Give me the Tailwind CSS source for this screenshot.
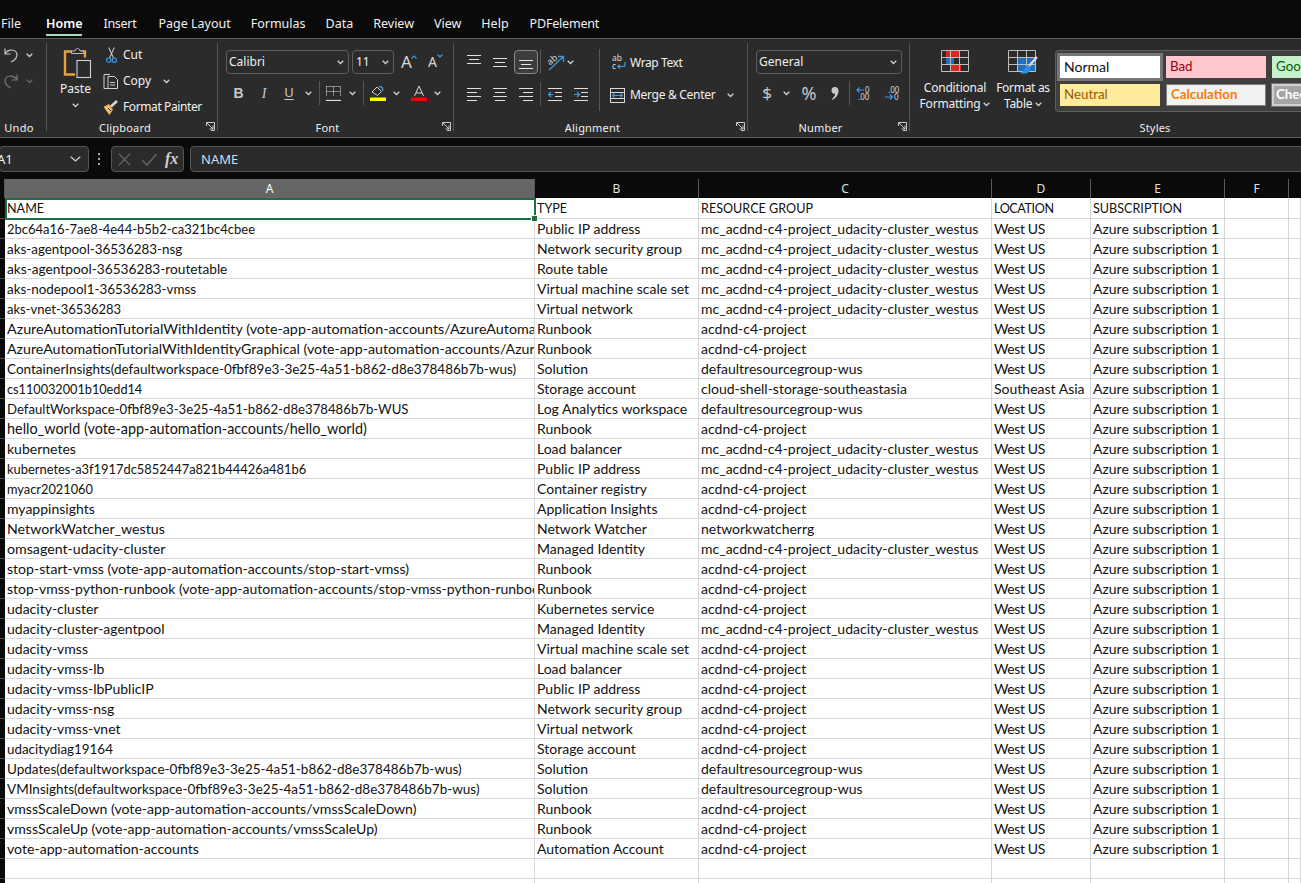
<!DOCTYPE html>
<html><head><meta charset="utf-8"><script src="https://cdn.jsdelivr.net/npm/@tailwindcss/browser@4"></script></head>
<body class="bg-[#0a0a0a]">
<div class="w-[1301px] h-[883px] overflow-hidden flex flex-col bg-[#0a0a0a] text-[#f0f0f0] font-['Noto_Sans','Open_Sans',sans-serif] text-[12px]">

<!-- tabs -->
<div class="h-[38px] shrink-0 flex items-end pb-[6px] pl-[1px] text-[12.5px] leading-[16px] gap-[20px]">
  <span>File</span>
  <span class="ml-[5px] relative font-semibold text-white">Home<span class="absolute left-0 right-0 bottom-[-4px] h-[2px] bg-[#a9dbba]"></span></span>
  <span class="ml-[1px] tracking-[-.3px]">Insert</span><span class="ml-[2px]">Page Layout</span><span>Formulas</span><span>Data</span><span>Review</span><span>View</span><span>Help</span><span class="ml-[1px] tracking-[-.2px]">PDFelement</span>
</div>

<!-- ribbon -->
<div class="h-[100px] shrink-0 flex bg-[#2b2b2b] border-t border-b border-[#5a5a5a] whitespace-nowrap">

  <!-- undo -->
  <div class="w-[46px] shrink-0 flex flex-col">
    <div class="h-[80px] pt-[6px]">
      <div class="flex items-center h-[20px]">
        <svg class="ml-[3px]" width="16" height="18" viewBox="0 0 16 18" fill="none" stroke="#c4c4c4" stroke-width="1.2"><path d="M2 2.5v5.500h5.500M2 8C4 3.500 11 2.500 13.500 6.500 15.500 10.500 12 14.500 8 16"/></svg>
        <svg class="ml-[7px]" width="7" height="5" viewBox="0 0 7 5" fill="none" stroke="#d0d0d0" stroke-width="1.3"><path d="M.7.7l2.800 2.800L6.300.7"/></svg>
      </div>
      <div class="flex items-center h-[20px] mt-[6px]">
        <svg class="ml-[3px]" width="16" height="18" viewBox="0 0 16 18" fill="none" stroke="#777" stroke-width="1.200"><path d="M14 2.500v5.500H8.500M14 8C12 3.500 5 2.500 2.500 6.500.5 10.500 4 14.500 8 16"/></svg>
        <svg class="ml-[7px]" width="7" height="5" viewBox="0 0 7 5" fill="none" stroke="#666" stroke-width="1.3"><path d="M.7.7l2.800 2.800L6.300.7"/></svg>
      </div>
    </div>
    <div class="h-[17px] leading-[17px] text-center text-[11px] tracking-[.3px] pr-[8px]">Undo</div>
  </div>
  <div class="w-px h-[88px] mt-[4px] shrink-0 bg-[#555]"></div>

  <!-- clipboard -->
  <div class="w-[170px] shrink-0 flex flex-col">
    <div class="h-[80px] flex">
      <div class="w-[56px] shrink-0 pt-[8px] flex flex-col items-center">
        <svg class="ml-[5px]" width="30" height="32" viewBox="0 0 30 32" fill="none"><path d="M9 4.500H2v23h10" stroke="#e8a33d" stroke-width="2.400"/><path d="M18 4.500h4v6" stroke="#e8a33d" stroke-width="2.400"/><path d="M8.500 6.500V4h3.500c0-3.200 5-3.200 5 0h3.500v2.500z" stroke="#bdbdbd" stroke-width="1" fill="#2b2b2b"/><rect x="14" y="13.500" width="13.500" height="17" stroke="#d0d0d0" stroke-width="1.100" fill="#2b2b2b"/></svg>
        <span class="mt-[2px] ml-[1px] leading-[16px] text-[12px]">Paste</span>
        <svg class="mt-[6px]" width="7" height="5" viewBox="0 0 7 5" fill="none" stroke="#d0d0d0" stroke-width="1.300"><path d="M.7.7l2.800 2.800L6.300.7"/></svg>
      </div>
      <div class="flex flex-col pt-[3px] leading-[26px]">
        <div class="flex items-center h-[26px]">
          <svg class="ml-[1px]" width="15" height="18" viewBox="0 0 16 18" fill="none"><path d="M5 1l5 11M11 1L6 12" stroke="#c8c8c8" stroke-width="1.100"/><circle cx="5" cy="14.500" r="2.300" stroke="#3c9ae0" stroke-width="1.300"/><circle cx="11" cy="14.500" r="2.300" stroke="#3c9ae0" stroke-width="1.300"/></svg>
          <span class="ml-[4px]">Cut</span>
        </div>
        <div class="flex items-center h-[26px]">
          <svg width="16" height="17" viewBox="0 0 16 17" fill="none" stroke="#d0d0d0" stroke-width="1"><path d="M5.500 15.500H1V1.500h6"/><path d="M5 3.500h6.500l3 3v9H5z" fill="#2b2b2b"/><path d="M7 9.500h5M7 12h5"/></svg>
          <span class="ml-[4px]">Copy</span>
          <svg class="ml-[12px]" width="7" height="5" viewBox="0 0 7 5" fill="none" stroke="#d0d0d0" stroke-width="1.300"><path d="M.7.7l2.800 2.800L6.300.7"/></svg>
        </div>
        <div class="flex items-center h-[26px]">
          <svg width="16" height="16" viewBox="0 0 16 16" fill="none"><path d="M1 8l5.500 7.500 3-5L6 5.500z" fill="#f2c46d" stroke="#e8a33d"/><path d="M8 7.500l6-5.500" stroke="#d8d8d8" stroke-width="2.600"/><path d="M5 9l3 3" stroke="#2b2b2b"/></svg>
          <span class="ml-[4px] tracking-[-.4px]">Format Painter</span>
        </div>
      </div>
    </div>
    <div class="relative h-[17px] leading-[17px] text-center text-[11px] tracking-[.2px] pr-[14px]">Clipboard
      <svg class="absolute right-[2px] top-[3px]" width="9" height="9" viewBox="0 0 9 9" fill="none" stroke="#c8c8c8"><path d="M.5 4V.5H8.500V8.500H5"/><path d="M1 1l6 6M7 3.500V7H3.500"/></svg>
    </div>
  </div>
  <div class="w-px h-[88px] mt-[4px] shrink-0 bg-[#555]"></div>

  <!-- font -->
  <div class="w-[235px] shrink-0 flex flex-col">
    <div class="h-[80px] pt-[11px]">
      <div class="flex items-center h-[24px]">
        <div class="ml-[8px] w-[123px] h-[24px] shrink-0 rounded-[4px] border border-[#5e5e5e] flex items-center justify-between pl-[2px] pr-[4px]"><span>Calibri</span><svg width="7" height="5" viewBox="0 0 7 5" fill="none" stroke="#d0d0d0" stroke-width="1.300"><path d="M.7.7l2.800 2.800L6.300.7"/></svg></div>
        <div class="ml-[3px] w-[42px] h-[24px] shrink-0 rounded-[4px] border border-[#5e5e5e] flex items-center justify-between pl-[3px] pr-[4px]"><span>11</span><svg width="7" height="5" viewBox="0 0 7 5" fill="none" stroke="#d0d0d0" stroke-width="1.300"><path d="M.7.7l2.800 2.800L6.300.7"/></svg></div>
        <div class="ml-[7px] w-[18px] shrink-0 flex items-start text-[#d8d8d8]"><span class="text-[17px] leading-[20px]">A</span><svg class="mt-[3px] -ml-[1px]" width="6" height="4" viewBox="0 0 6 4" fill="none" stroke="#3c9ae0" stroke-width="1.200"><path d="M.5 3.500l2.500-2.500 2.500 2.500"/></svg></div>
        <div class="ml-[9px] w-[18px] shrink-0 flex items-start text-[#d8d8d8]"><span class="text-[14px] leading-[22px]">A</span><svg class="mt-[3px]" width="6" height="4" viewBox="0 0 6 4" fill="none" stroke="#3c9ae0" stroke-width="1.200"><path d="M.5.500l2.500 2.500 2.500-2.500"/></svg></div>
      </div>
      <div class="flex items-center h-[24px] mt-[7px]">
        <span class="ml-[8px] w-[25px] text-center font-bold text-[14px] text-[#c8c8c8] font-['Liberation_Sans',sans-serif]">B</span>
        <span class="w-[26px] text-center italic text-[14px] text-[#c8c8c8] font-['Liberation_Serif',serif]">I</span>
        <span class="w-[24px] text-center underline underline-offset-2 text-[13px] text-[#c8c8c8]">U</span>
        <span class="w-[14px] flex justify-center"><svg width="7" height="5" viewBox="0 0 7 5" fill="none" stroke="#d0d0d0" stroke-width="1.300"><path d="M.7.7l2.800 2.800L6.300.7"/></svg></span>
        <span class="ml-[4px] w-px h-[24px] bg-[#555]"></span>
        <svg class="ml-[6px]" width="15" height="15" viewBox="0 0 15 15" fill="none" stroke="#e0e0e0"><path d="M.5.500h14M.5.500v10M14.500.500v10M7.500.500v10M.5 5.500h14" stroke-dasharray="1 1"/><path d="M0 14.500h15" stroke-width="1.200"/></svg>
        <span class="ml-[4px] w-[14px] flex justify-center"><svg width="7" height="5" viewBox="0 0 7 5" fill="none" stroke="#d0d0d0" stroke-width="1.300"><path d="M.7.7l2.800 2.800L6.300.7"/></svg></span>
        <span class="ml-[4px] w-px h-[24px] bg-[#555]"></span>
        <svg class="ml-[6px]" width="16" height="16" viewBox="0 0 16 16" fill="none"><path d="M2 7l5-5 4.500 4.500-4 4z" stroke="#d0d0d0"/><path d="M9 1.500c2.500 0 4 2 4 4.500" stroke="#3c9ae0" stroke-width="1.300"/><rect x="0" y="12.500" width="16" height="3.500" fill="#ffff00" stroke="none"/></svg>
        <span class="ml-[3px] w-[14px] flex justify-center"><svg width="7" height="5" viewBox="0 0 7 5" fill="none" stroke="#d0d0d0" stroke-width="1.300"><path d="M.7.7l2.800 2.800L6.300.7"/></svg></span>
        <svg class="ml-[8px]" width="16" height="16" viewBox="0 0 16 16" fill="none"><path d="M3.500 11L8 1l4.500 10M5 8h6" stroke="#d8d8d8" stroke-width="1"/><rect x="0" y="12.500" width="16" height="3.500" fill="#ff0000"/></svg>
        <span class="ml-[3px] w-[14px] flex justify-center"><svg width="7" height="5" viewBox="0 0 7 5" fill="none" stroke="#d0d0d0" stroke-width="1.300"><path d="M.7.7l2.800 2.800L6.300.7"/></svg></span>
      </div>
    </div>
    <div class="relative h-[17px] leading-[17px] text-center text-[11px] tracking-[.2px] pr-[16px]">Font
      <svg class="absolute right-[2px] top-[3px]" width="9" height="9" viewBox="0 0 9 9" fill="none" stroke="#c8c8c8"><path d="M.5 4V.5H8.500V8.500H5"/><path d="M1 1l6 6M7 3.500V7H3.500"/></svg>
    </div>
  </div>
  <div class="w-px h-[88px] mt-[4px] shrink-0 bg-[#555]"></div>

  <!-- alignment -->
  <div class="w-[293px] shrink-0 flex flex-col">
    <div class="h-[80px] pt-[11px] flex">
      <div class="w-[145px] shrink-0">
        <div class="flex items-center h-[24px]">
          <svg class="ml-[13px]" width="14" height="14" viewBox="0 0 14 14" stroke="#e0e0e0" fill="none"><path d="M0 .5h14M2 4.500h10M0 8.500h14"/></svg>
          <svg class="ml-[12px]" width="14" height="14" viewBox="0 0 14 14" stroke="#e0e0e0" fill="none"><path d="M0 3.500h14M2 7.500h10M0 11.500h14"/></svg>
          <span class="ml-[7px] w-[24px] h-[24px] rounded-[4px] border border-[#8a8a8a] bg-[#3d3d3d] flex items-center justify-center"><svg width="14" height="14" viewBox="0 0 14 14" stroke="#e8e8e8" fill="none"><path d="M0 5.500h14M2 9.500h10M0 13.500h14"/></svg></span>
          <span class="ml-[2px] w-px h-[24px] bg-[#555]"></span>
          <svg class="ml-[6px]" width="18" height="18" viewBox="0 0 18 18" fill="none"><path d="M2 17L16 4M11 3.500h5.500V9" stroke="#3c9ae0" stroke-width="1.300"/><text x="0" y="10" font-size="9" fill="#d8d8d8" transform="rotate(-40 5 7)">ab</text></svg>
          <svg class="ml-[2px]" width="7" height="5" viewBox="0 0 7 5" fill="none" stroke="#d0d0d0" stroke-width="1.300"><path d="M.7.7l2.800 2.800L6.300.7"/></svg>
        </div>
        <div class="flex items-center h-[24px] mt-[8px]">
          <svg class="ml-[13px]" width="14" height="14" viewBox="0 0 14 14" stroke="#e0e0e0" fill="none"><path d="M0 1.500h14M0 5.500h10M0 9.500h14M0 13.500h10"/></svg>
          <svg class="ml-[12px]" width="14" height="14" viewBox="0 0 14 14" stroke="#e0e0e0" fill="none"><path d="M0 1.500h14M2 5.500h10M0 9.500h14M2 13.500h10"/></svg>
          <svg class="ml-[12px]" width="14" height="14" viewBox="0 0 14 14" stroke="#e0e0e0" fill="none"><path d="M0 1.500h14M4 5.500h10M0 9.500h14M4 13.500h10"/></svg>
          <span class="ml-[7px] w-px h-[24px] bg-[#555]"></span>
          <svg class="ml-[7px]" width="14" height="14" viewBox="0 0 14 14" fill="none"><path d="M0 1.500h14M7 5.500h7M7 9.500h7M0 13.500h14" stroke="#e0e0e0"/><path d="M5 7.500H.5M3 5L.5 7.500 3 10" stroke="#3c9ae0" stroke-width="1.200"/></svg>
          <svg class="ml-[12px]" width="14" height="14" viewBox="0 0 14 14" fill="none"><path d="M0 1.500h14M7 5.500h7M7 9.500h7M0 13.500h14" stroke="#e0e0e0"/><path d="M0 7.500h5M3 5l2.500 2.500L3 10" stroke="#3c9ae0" stroke-width="1.200"/></svg>
        </div>
      </div>
      <div class="w-px h-[62px] -mt-[1px] shrink-0 bg-[#555]"></div>
      <div class="flex-1">
        <div class="flex items-center h-[24px]">
          <svg class="ml-[12px]" width="15" height="16" viewBox="0 0 15 16" fill="none"><text x="0" y="7" font-size="8.500" fill="#d8d8d8">ab</text><text x="0" y="15" font-size="8.500" fill="#d8d8d8">c</text><path d="M13 8v2.500a2 2 0 0 1-2 2H6M8 10.500l-2.200 2L8 14.500" stroke="#3c9ae0" stroke-width="1.200"/></svg>
          <span class="ml-[3px] tracking-[-.4px] pt-[1px]">Wrap Text</span>
        </div>
        <div class="flex items-center h-[24px] mt-[9px]">
          <svg class="ml-[10px]" width="15" height="15" viewBox="0 0 15 15" fill="none"><rect x=".5" y=".5" width="14" height="14" stroke="#d8d8d8"/><path d="M.5 4.500h14M.5 10.500h14" stroke="#d8d8d8"/><path d="M2.500 7.500h10M4.500 5.500l-2 2 2 2M10.500 5.500l2 2-2 2" stroke="#3c9ae0" stroke-width="1.100"/></svg>
          <span class="ml-[5px] tracking-[-.3px]">Merge &amp; Center</span>
          <svg class="ml-[12px]" width="7" height="5" viewBox="0 0 7 5" fill="none" stroke="#d0d0d0" stroke-width="1.300"><path d="M.7.7l2.800 2.800L6.300.7"/></svg>
        </div>
      </div>
    </div>
    <div class="relative h-[17px] leading-[17px] text-center text-[11px] tracking-[.2px] pr-[16px]">Alignment
      <svg class="absolute right-[2px] top-[3px]" width="9" height="9" viewBox="0 0 9 9" fill="none" stroke="#c8c8c8"><path d="M.5 4V.5H8.500V8.500H5"/><path d="M1 1l6 6M7 3.500V7H3.500"/></svg>
    </div>
  </div>
  <div class="w-px h-[88px] mt-[4px] shrink-0 bg-[#555]"></div>

  <!-- number -->
  <div class="w-[161px] shrink-0 flex flex-col">
    <div class="h-[80px] pt-[11px]">
      <div class="ml-[8px] w-[146px] h-[24px] rounded-[4px] border border-[#5e5e5e] flex items-center justify-between pl-[2px] pr-[4px]"><span>General</span><svg width="7" height="5" viewBox="0 0 7 5" fill="none" stroke="#d0d0d0" stroke-width="1.300"><path d="M.7.7l2.800 2.800L6.300.7"/></svg></div>
      <div class="flex items-center h-[24px] mt-[7px]">
        <span class="ml-[8px] w-[22px] text-center text-[17px] text-[#c8c8c8]">$</span>
        <span class="ml-[1px] w-[14px] flex justify-center"><svg width="7" height="5" viewBox="0 0 7 5" fill="none" stroke="#d0d0d0" stroke-width="1.300"><path d="M.7.7l2.800 2.800L6.300.7"/></svg></span>
        <span class="w-[32px] text-center text-[18px] text-[#c8c8c8]">%</span>
        <span class="w-[20px] flex justify-center"><svg width="8" height="13" viewBox="0 0 8 13" fill="#c8c8c8"><path d="M3.800 0a3.500 3.500 0 0 1 3.700 3.700c0 4-2.500 7.300-6 9.100l-.7-.9c2-1.500 3.200-3.200 3.400-5.100A3.200 3.200 0 0 1 .5 3.400 3.400 3.400 0 0 1 3.800 0z"/></svg></span>
        <span class="ml-[4px] w-px h-[24px] bg-[#555]"></span>
        <svg class="ml-[6px]" width="16" height="16" viewBox="0 0 16 16" fill="none"><path d="M8 5H1M3.500 2.500L1 5l2.500 2.500" stroke="#3c9ae0" stroke-width="1.200"/><text x="9" y="7.500" font-size="8" fill="#d8d8d8">0</text><text x="2" y="15" font-size="8" fill="#d8d8d8">.00</text></svg>
        <svg class="ml-[13px]" width="16" height="16" viewBox="0 0 16 16" fill="none"><text x="3" y="7.500" font-size="8" fill="#d8d8d8">.00</text><path d="M0 12h7M5 9.500L7.500 12 5 14.500" stroke="#3c9ae0" stroke-width="1.200"/><text x="9" y="15" font-size="8" fill="#d8d8d8">0</text></svg>
      </div>
    </div>
    <div class="relative h-[17px] leading-[17px] text-center text-[11px] tracking-[.2px] pr-[16px]">Number
      <svg class="absolute right-[2px] top-[3px]" width="9" height="9" viewBox="0 0 9 9" fill="none" stroke="#c8c8c8"><path d="M.5 4V.5H8.500V8.500H5"/><path d="M1 1l6 6M7 3.500V7H3.500"/></svg>
    </div>
  </div>
  <div class="w-px h-[88px] mt-[4px] shrink-0 bg-[#555]"></div>

  <!-- styles -->
  <div class="w-[490px] shrink-0 flex flex-col">
    <div class="h-[80px] pt-[11px] flex">
      <div class="ml-[12px] w-[66px] shrink-0 flex flex-col items-center">
        <svg width="28" height="22" viewBox="0 0 28 22" fill="none"><path d="M5 .5h13v7H5zM9 14.500h11v7H9z" fill="#d9281f"/><path d="M5 7.500h8v7H5z" fill="#1f6fc0"/><path d="M.5.500h27v21H.5zM.5 7.500h27M.5 14.500h27M9.500.500v21M18.500.500v21" stroke="#bdbdbd"/></svg>
        <div class="mt-[8px] text-center leading-[16px] whitespace-nowrap tracking-[-.2px]">Conditional<br>Formatting <svg class="inline" width="7" height="5" viewBox="0 0 7 5" fill="none" stroke="#d0d0d0" stroke-width="1.300"><path d="M.7.7l2.800 2.800L6.300.7"/></svg></div>
      </div>
      <div class="ml-[2px] w-[66px] shrink-0 flex flex-col items-center">
        <svg width="30" height="27" viewBox="0 0 30 27" fill="none"><path d="M9.500 7.500h18v14h-18z" fill="#1f6fc0"/><path d="M.5.500h27v21H.5zM.5 7.500h27M.5 14.500h27M9.500.500v21M18.500.500v21" stroke="#bdbdbd"/><path d="M29 7l-8 9" stroke="#d8d8d8" stroke-width="2.500"/><path d="M20 15c-3 1-3 4-5 6-1 1-3 1.500-3 2 3 1.500 9 1 10-3 .5-2-.5-4-2-5z" fill="#2f8fdc"/></svg>
        <div class="mt-[3px] text-center leading-[16px] whitespace-nowrap tracking-[-.3px]">Format as<br>Table <svg class="inline" width="7" height="5" viewBox="0 0 7 5" fill="none" stroke="#d0d0d0" stroke-width="1.300"><path d="M.7.7l2.800 2.800L6.300.7"/></svg></div>
      </div>
      <div class="-ml-[1px] w-[246px] h-[62px] shrink-0 rounded-l-[4px] bg-[#3f3f3f] border-l border-y border-[#5e5e5e] pl-[4px] pt-[5px] overflow-hidden">
        <div class="grid grid-cols-[100px_100px_100px] auto-rows-[22px] gap-[6px] font-['Lato',sans-serif] text-[13.300px] leading-[21px]">
          <div class="bg-white text-[#111] pl-[4px] ring-[3px] ring-[#777] text-[14px]">Normal</div>
          <div class="bg-[#ffc7ce] text-[#9c0006] pl-[4px]">Bad</div>
          <div class="bg-[#c6efce] text-[#006100] pl-[4px]">Good</div>
          <div class="bg-[#ffeb9c] text-[#9c5700] pl-[4px]">Neutral</div>
          <div class="bg-[#f2f2f2] text-[#fa7d00] font-bold pl-[4px] border border-[#7f7f7f] leading-[19px]">Calculation</div>
          <div class="bg-[#a5a5a5] text-white font-bold pl-[2px] border-2 border-[#d0d0d0] ring-1 ring-[#777] leading-[17px]">Check Cell</div>
        </div>
      </div>
    </div>
    <div class="h-[17px] leading-[17px] text-center text-[11px] tracking-[.2px]">Styles</div>
  </div>
</div>

<!-- formula bar -->
<div class="h-[41px] shrink-0 flex items-start pt-[8px] bg-[#0a0a0a]">
  <div class="-ml-[1px] w-[90px] h-[26px] shrink-0 rounded-[4px] border border-[#555] bg-[#2b2b2b] flex items-center justify-between pr-[7px] overflow-hidden"><span class="-ml-[3px] pt-[1px] text-[13px]">A1</span><svg width="11" height="6" viewBox="0 0 11 6" fill="none" stroke="#d0d0d0" stroke-width="1.200"><path d="M.7.7l4.800 4.300L10.300.7"/></svg></div>
  <div class="ml-[7px] w-[5px] h-[26px] shrink-0 flex flex-col items-center justify-center gap-[3px]"><i class="block w-[2px] h-[2px] bg-[#aaa]"></i><i class="block w-[2px] h-[2px] bg-[#aaa]"></i><i class="block w-[2px] h-[2px] bg-[#aaa]"></i></div>
  <div class="ml-[10px] w-[73px] h-[26px] shrink-0 rounded-[4px] border border-[#555] bg-[#2b2b2b] flex items-center pl-[6px] overflow-hidden">
    <svg width="13" height="13" viewBox="0 0 13 13" fill="none" stroke="#6a6a6a" stroke-width="1.200"><path d="M.7.700l11.600 11.600M12.300.700L.7 12.300"/></svg>
    <svg class="ml-[10px]" width="16" height="13" viewBox="0 0 16 13" fill="none" stroke="#6a6a6a" stroke-width="1.200"><path d="M1 7l5 5L15.500 1"/></svg>
    <span class="ml-[8px] font-['Liberation_Serif',serif] italic font-bold text-[16px] text-[#d0d0d0]">fx</span>
  </div>
  <div class="ml-[6px] w-[1120px] h-[26px] shrink-0 rounded-[4px] border border-[#555] bg-[#2b2b2b] flex items-center pl-[10px] pt-[1px] text-[13px] text-[#c9dff5]">NAME</div>
</div>

<!-- sheet -->
<div class="relative flex-1 overflow-hidden bg-white">
  <table class="table-fixed w-[1301px] border-separate border-spacing-0 font-['Lato',sans-serif] text-[14px] text-[#111] [&_td]:h-[20px] [&_td]:pt-[1px] [&_td]:px-[2px] [&_td]:pb-0 [&_td]:leading-[18px] [&_td]:whitespace-nowrap [&_td]:overflow-hidden [&_td]:border-r [&_td]:border-b [&_td]:border-[#d6d6d6] [&_td:first-child]:px-0 [&_td:first-child]:bg-[#0a0a0a] [&_td:first-child]:border-r-0 [&_td:first-child]:border-b-[#4a4a4a] [&_td:nth-child(5)]:tracking-[-.4px]">
    <colgroup><col class="w-[5px]"><col class="w-[530px]"><col class="w-[164px]"><col class="w-[293px]"><col class="w-[99px]"><col class="w-[134px]"><col class="w-[64px]"><col class="w-[12px]"></colgroup>
    <thead class="font-['Noto_Sans',sans-serif] text-[12px] text-[#e0e0e0] [&_th]:h-[19px] [&_th]:p-0 [&_th]:font-normal [&_th]:leading-[19px] [&_th]:bg-[#0a0a0a] [&_th]:border-r [&_th]:border-[#5a5a5a]">
      <tr><th></th><th class="bg-[#666666]! text-white">A</th><th>B</th><th>C</th><th>D</th><th>E</th><th>F</th><th class="border-r-0!"></th></tr>
    </thead>
    <tbody>
      <tr class="text-[12.600px]"><td class="h-[21px]!"></td><td>NAME</td><td>TYPE</td><td>RESOURCE GROUP</td><td>LOCATION</td><td>SUBSCRIPTION</td><td></td><td></td></tr>
      <tr><td></td><td class="text-[13px]">2bc64a16-7ae8-4e44-b5b2-ca321bc4cbee</td><td>Public IP address</td><td>mc_acdnd-c4-project_udacity-cluster_westus</td><td>West US</td><td>Azure subscription 1</td><td></td><td></td></tr>
      <tr><td></td><td class="text-[13.400px]">aks-agentpool-36536283-nsg</td><td>Network security group</td><td>mc_acdnd-c4-project_udacity-cluster_westus</td><td>West US</td><td>Azure subscription 1</td><td></td><td></td></tr>
      <tr><td></td><td class="text-[13.700px]">aks-agentpool-36536283-routetable</td><td>Route table</td><td>mc_acdnd-c4-project_udacity-cluster_westus</td><td>West US</td><td>Azure subscription 1</td><td></td><td></td></tr>
      <tr><td></td><td class="text-[13.400px]">aks-nodepool1-36536283-vmss</td><td>Virtual machine scale set</td><td>mc_acdnd-c4-project_udacity-cluster_westus</td><td>West US</td><td>Azure subscription 1</td><td></td><td></td></tr>
      <tr><td></td><td class="text-[13px]">aks-vnet-36536283</td><td>Virtual network</td><td>mc_acdnd-c4-project_udacity-cluster_westus</td><td>West US</td><td>Azure subscription 1</td><td></td><td></td></tr>
      <tr><td></td><td class="text-[14.300px]">AzureAutomationTutorialWithIdentity (vote-app-automation-accounts/AzureAutomationTutorialWithIdentity)</td><td>Runbook</td><td>acdnd-c4-project</td><td>West US</td><td>Azure subscription 1</td><td></td><td></td></tr>
      <tr><td></td><td class="text-[14.200px]">AzureAutomationTutorialWithIdentityGraphical (vote-app-automation-accounts/AzureAutomationTutorialWithIdentityGraphical)</td><td>Runbook</td><td>acdnd-c4-project</td><td>West US</td><td>Azure subscription 1</td><td></td><td></td></tr>
      <tr><td></td><td class="text-[13.500px]">ContainerInsights(defaultworkspace-0fbf89e3-3e25-4a51-b862-d8e378486b7b-wus)</td><td>Solution</td><td>defaultresourcegroup-wus</td><td>West US</td><td>Azure subscription 1</td><td></td><td></td></tr>
      <tr><td></td><td class="text-[12.700px]">cs110032001b10edd14</td><td>Storage account</td><td>cloud-shell-storage-southeastasia</td><td class="tracking-normal!">Southeast Asia</td><td>Azure subscription 1</td><td></td><td></td></tr>
      <tr><td></td><td class="text-[13.200px]">DefaultWorkspace-0fbf89e3-3e25-4a51-b862-d8e378486b7b-WUS</td><td>Log Analytics workspace</td><td>defaultresourcegroup-wus</td><td>West US</td><td>Azure subscription 1</td><td></td><td></td></tr>
      <tr><td></td><td class="text-[14.400px]">hello_world (vote-app-automation-accounts/hello_world)</td><td>Runbook</td><td>acdnd-c4-project</td><td>West US</td><td>Azure subscription 1</td><td></td><td></td></tr>
      <tr><td></td><td>kubernetes</td><td>Load balancer</td><td>mc_acdnd-c4-project_udacity-cluster_westus</td><td>West US</td><td>Azure subscription 1</td><td></td><td></td></tr>
      <tr><td></td><td class="text-[12.900px]">kubernetes-a3f1917dc5852447a821b44426a481b6</td><td>Public IP address</td><td>mc_acdnd-c4-project_udacity-cluster_westus</td><td>West US</td><td>Azure subscription 1</td><td></td><td></td></tr>
      <tr><td></td><td class="text-[12.800px]">myacr2021060</td><td>Container registry</td><td>acdnd-c4-project</td><td>West US</td><td>Azure subscription 1</td><td></td><td></td></tr>
      <tr><td></td><td>myappinsights</td><td>Application Insights</td><td>acdnd-c4-project</td><td>West US</td><td>Azure subscription 1</td><td></td><td></td></tr>
      <tr><td></td><td class="text-[14.200px]">NetworkWatcher_westus</td><td>Network Watcher</td><td>networkwatcherrg</td><td>West US</td><td>Azure subscription 1</td><td></td><td></td></tr>
      <tr><td></td><td class="text-[14.200px]">omsagent-udacity-cluster</td><td>Managed Identity</td><td>mc_acdnd-c4-project_udacity-cluster_westus</td><td>West US</td><td>Azure subscription 1</td><td></td><td></td></tr>
      <tr><td></td><td class="text-[14.100px]">stop-start-vmss (vote-app-automation-accounts/stop-start-vmss)</td><td>Runbook</td><td>acdnd-c4-project</td><td>West US</td><td>Azure subscription 1</td><td></td><td></td></tr>
      <tr><td></td><td>stop-vmss-python-runbook (vote-app-automation-accounts/stop-vmss-python-runbook)</td><td>Runbook</td><td>acdnd-c4-project</td><td>West US</td><td>Azure subscription 1</td><td></td><td></td></tr>
      <tr><td></td><td>udacity-cluster</td><td>Kubernetes service</td><td>acdnd-c4-project</td><td>West US</td><td>Azure subscription 1</td><td></td><td></td></tr>
      <tr><td></td><td>udacity-cluster-agentpool</td><td>Managed Identity</td><td>mc_acdnd-c4-project_udacity-cluster_westus</td><td>West US</td><td>Azure subscription 1</td><td></td><td></td></tr>
      <tr><td></td><td>udacity-vmss</td><td>Virtual machine scale set</td><td>acdnd-c4-project</td><td>West US</td><td>Azure subscription 1</td><td></td><td></td></tr>
      <tr><td></td><td>udacity-vmss-lb</td><td>Load balancer</td><td>acdnd-c4-project</td><td>West US</td><td>Azure subscription 1</td><td></td><td></td></tr>
      <tr><td></td><td>udacity-vmss-lbPublicIP</td><td>Public IP address</td><td>acdnd-c4-project</td><td>West US</td><td>Azure subscription 1</td><td></td><td></td></tr>
      <tr><td></td><td>udacity-vmss-nsg</td><td>Network security group</td><td>acdnd-c4-project</td><td>West US</td><td>Azure subscription 1</td><td></td><td></td></tr>
      <tr><td></td><td>udacity-vmss-vnet</td><td>Virtual network</td><td>acdnd-c4-project</td><td>West US</td><td>Azure subscription 1</td><td></td><td></td></tr>
      <tr><td></td><td class="text-[13.400px]">udacitydiag19164</td><td>Storage account</td><td>acdnd-c4-project</td><td>West US</td><td>Azure subscription 1</td><td></td><td></td></tr>
      <tr><td></td><td class="text-[13.500px]">Updates(defaultworkspace-0fbf89e3-3e25-4a51-b862-d8e378486b7b-wus)</td><td>Solution</td><td>defaultresourcegroup-wus</td><td>West US</td><td>Azure subscription 1</td><td></td><td></td></tr>
      <tr><td></td><td class="text-[13.500px]">VMInsights(defaultworkspace-0fbf89e3-3e25-4a51-b862-d8e378486b7b-wus)</td><td>Solution</td><td>defaultresourcegroup-wus</td><td>West US</td><td>Azure subscription 1</td><td></td><td></td></tr>
      <tr><td></td><td class="text-[14.100px]">vmssScaleDown (vote-app-automation-accounts/vmssScaleDown)</td><td>Runbook</td><td>acdnd-c4-project</td><td>West US</td><td>Azure subscription 1</td><td></td><td></td></tr>
      <tr><td></td><td class="text-[14.100px]">vmssScaleUp (vote-app-automation-accounts/vmssScaleUp)</td><td>Runbook</td><td>acdnd-c4-project</td><td>West US</td><td>Azure subscription 1</td><td></td><td></td></tr>
      <tr><td></td><td class="text-[14.100px]">vote-app-automation-accounts</td><td>Automation Account</td><td>acdnd-c4-project</td><td>West US</td><td>Azure subscription 1</td><td></td><td></td></tr>
      <tr><td></td><td></td><td></td><td></td><td></td><td></td><td></td><td></td></tr>
      <tr><td></td><td></td><td></td><td></td><td></td><td></td><td></td><td></td></tr>
    </tbody>
  </table>
  <div class="absolute left-[5px] top-[19px] w-[531px] h-[22px] border-2 border-[#1f6e43] pointer-events-none"><span class="absolute -right-[3px] -bottom-[3px] w-[5px] h-[5px] bg-[#1f6e43] ring-1 ring-white"></span></div>
</div>
</div>
</body></html>
